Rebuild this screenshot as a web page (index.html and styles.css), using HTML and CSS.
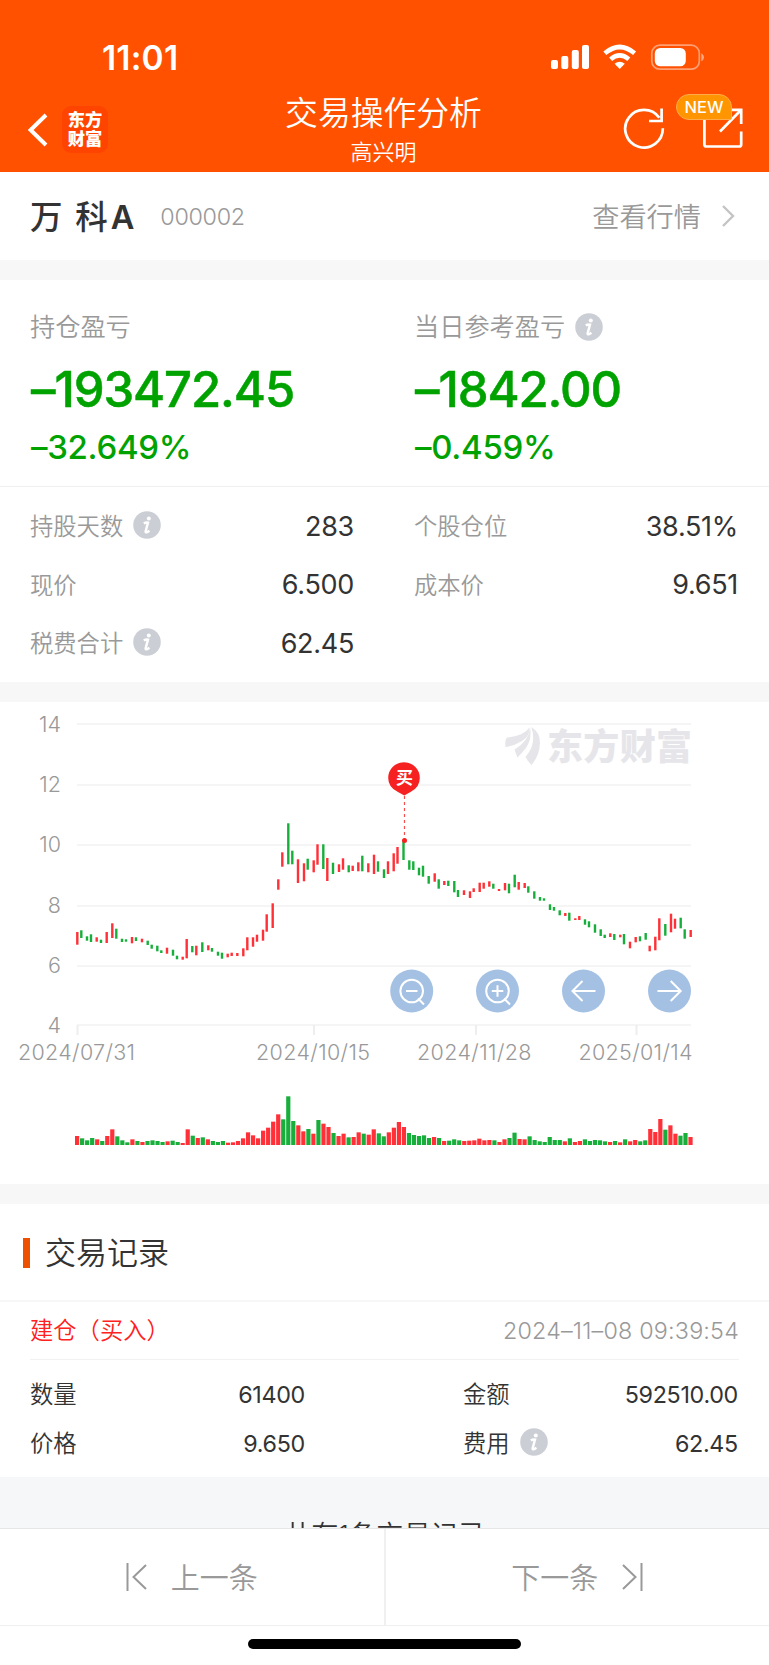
FILE: index.html
```html
<!DOCTYPE html>
<html lang="zh-CN">
<head>
<meta charset="UTF-8"/>
<title>交易操作分析</title>
<link rel="stylesheet" href="styles.css">
</head>

<body>
<svg width="0" height="0" class="defs">
  <symbol id="info" viewBox="0 0 28 28">
    <circle cx="14" cy="14" r="13.8" fill="#cbcfd5"/>
    <circle cx="15.800" cy="7.600" r="2" fill="#fff"/>
    <path d="M10.800 12.400Q13 11.200 15 11.600L12.600 20.400Q12.600 22.600 16.400 19.800" fill="none" stroke="#fff" stroke-width="2.400"/>
  </symbol>
</svg>
<div id="top">
  <div class="status">
    <span class="time">11:01</span>
    <svg width="154" height="28" viewBox="0 0 154 28">
      <g fill="#fff">
        <rect x="0" y="16" width="7" height="9" rx="2"/>
        <rect x="10.300" y="12" width="7" height="13" rx="2"/>
        <rect x="20.800" y="6" width="7" height="19" rx="2"/>
        <rect x="31" y="1" width="7" height="24" rx="2"/>
      </g>
      <g fill="none" stroke="#fff" stroke-width="4.600">
        <path d="M53.800 9.200Q68.700 -3.200 83.600 9.200"/>
        <path d="M59.600 15.200Q68.700 7.600 77.800 15.200"/>
      </g>
      <path d="M68.700 25L63.600 19.700Q68.700 15.700 73.800 19.700Z" fill="#fff"/>
      <rect x="100.800" y="1.200" width="47.500" height="24" rx="8" fill="none" stroke="#fff" stroke-opacity=".45" stroke-width="1.700"/>
      <rect x="103.800" y="4" width="31" height="18.300" rx="5.500" fill="#fff"/>
      <path d="M150.300 9.200Q153 10.600 153 13.200T150.300 17.200Z" fill="#fff" fill-opacity=".5"/>
    </svg>
  </div>
  <div class="nav">
    <div class="nav-left">
      <svg width="20" height="34" viewBox="0 0 20 34"><path d="M18 2L2.600 17L18 32" fill="none" stroke="#fff" stroke-width="4"/></svg>
      <div class="logo">东方<br/>财富</div>
    </div>
    <div class="nav-title">
      <h1>交易操作分析</h1>
      <p>高兴明</p>
    </div>
    <div class="nav-right">
      <svg width="42" height="42" viewBox="0 0 42 42"><path d="M36.300 10.800A18.800 18.800 0 1 0 39.800 21.200M38.600 1.500V14H26" fill="none" stroke="#fff" stroke-width="2.700"/></svg>
      <div class="share">
        <svg width="42" height="42" viewBox="0 0 42 42"><path d="M2.400 10V37.500Q2.400 39.500 4.400 39.500H37.200Q39.200 39.500 39.200 37.500V24.500M28 2.800H39.200V17M38.500 3.500L18 24.500" fill="none" stroke="#fff" stroke-width="2.700"/></svg>
        <span class="badge">NEW</span>
      </div>
    </div>
  </div>
</div>

<div class="stock">
  <b>万 科<i>A</i></b><span class="code">000002</span>
  <a class="quote">查看行情<svg width="14" height="24" viewBox="0 0 14 24"><path d="M2 2L12 12L2 22" fill="none" stroke="#c4c4c4" stroke-width="2.400"/></svg></a>
</div>

<div class="profit">
  <div class="col">
    <p class="tit">持仓盈亏</p>
    <p class="big">–193472.45</p>
    <p class="rate">–32.649%</p>
  </div>
  <div class="col">
    <p class="tit">当日参考盈亏<svg class="ico"><use href="#info"/></svg></p>
    <p class="big">–1842.00</p>
    <p class="rate">–0.459%</p>
  </div>
</div>
<div class="detail">
  <div class="item"><label>持股天数<svg class="ico"><use href="#info"/></svg></label><span>283</span></div>
  <div class="item"><label>个股仓位</label><span>38.51%</span></div>
  <div class="item"><label>现价</label><span>6.500</span></div>
  <div class="item"><label>成本价</label><span>9.651</span></div>
  <div class="item"><label>税费合计<svg class="ico"><use href="#info"/></svg></label><span>62.45</span></div>
</div>

<div class="chart">
  <svg width="769" height="482" viewBox="0 702 769 482">
    <path class="grid" d="M77 724H691M77 785H691M77 845H691M77 906H691M77 966H691M77 1025H691"/>
    <path class="tick" d="M77.500 1025V1035M314 1025V1035M476 1025V1035M636.500 1025V1035"/>
    <g class="ylabel">
      <text x="61" y="731.500">14</text>
      <text x="61" y="792">12</text>
      <text x="61" y="852">10</text>
      <text x="61" y="912.500">8</text>
      <text x="61" y="973">6</text>
      <text x="61" y="1033">4</text>
    </g>
    <g class="xlabel">
      <text x="18" y="1060" textLength="117">2024/07/31</text>
      <text x="256" y="1060" textLength="114">2024/10/15</text>
      <text x="417" y="1060" textLength="114.500">2024/11/28</text>
      <text x="578.500" y="1060" textLength="114">2025/01/14</text>
    </g>
    <g class="mark">
      <path d="M505.500 747Q504.500 740 507 737.500Q523 736.500 529.500 727.500Q530 736 522 741Q514 746 505.500 747Z"/>
      <path d="M530.200 728Q532 739 526 748Q522 753 517.500 757.500Q515.500 753 514.500 749.500Q528 742 530.200 728Z"/>
      <path d="M531.300 727Q540 732 540 743Q539.500 756 531.500 765Q527.500 761 525.500 757Q537 744 531.300 727Z"/>
      <text x="547" y="760" textLength="145">东方财富</text>
    </g>
    <g id="kline"></g>
    <g id="volume"></g>
    <path d="M404.500 796V840" stroke="#f62222" stroke-opacity=".8" stroke-width="1.200" stroke-dasharray="3 3"/>
    <circle cx="404.500" cy="840.500" r="2.500" fill="#f62222"/>
    <path d="M404.300 795.500L398 792Q388.200 787.500 388.200 778A15.800 15.800 0 0 1 419.800 778Q419.800 787.500 410.500 792Z" fill="#f62222"/>
    <text class="buy" x="404.500" y="784">买</text>
    <g class="btns">
      <circle cx="411.700" cy="991" r="21.500"/><circle cx="497.500" cy="991" r="21.500"/><circle cx="583.500" cy="991" r="21.500"/><circle cx="669.500" cy="991" r="21.500"/>
      <path d="M423 991A11.300 11.300 0 1 1 400.400 991A11.300 11.300 0 1 1 423 991M418 998.500L424 1004.500M406 991H417.500"/>
      <path d="M508.800 991A11.300 11.300 0 1 1 486.200 991A11.300 11.300 0 1 1 508.800 991M504 998.500L510 1004.500M491.800 991H503.300M497.500 985.200V996.800"/>
      <path d="M595.500 991H573M582.500 981L572.500 991L582.500 1001"/>
      <path d="M657.500 991H680M670.700 981L680.700 991L670.700 1001"/>
    </g>
  </svg>
</div>

<div class="record">
  <h2>交易记录</h2>
  <div class="rec-head"><span class="red">建仓（买入）</span><span class="date">2024–11–08 09:39:54</span></div>
  <div class="rec-body">
    <div class="item"><label>数量</label><span>61400</span></div>
    <div class="item"><label>金额</label><span>592510.00</span></div>
    <div class="item"><label>价格</label><span>9.650</span></div>
    <div class="item"><label>费用<svg class="ico"><use href="#info"/></svg></label><span>62.45</span></div>
  </div>
</div>
<div class="total">共有1条交易记录</div>
<div class="pager">
  <a><svg width="22" height="28" viewBox="0 0 22 28"><path d="M1.500 0V28M20 2L7.500 14L20 26" fill="none" stroke="#999" stroke-width="2"/></svg><span>上一条</span></a>
  <a><span>下一条</span><svg width="22" height="28" viewBox="0 0 22 28"><path d="M20.500 0V28M2 2L14.500 14L2 26" fill="none" stroke="#999" stroke-width="2"/></svg></a>
</div>
<div class="home"><i></i></div>

<script type="text/javascript">
// x, high, low, 1 = up / 0 = down
var kline = [
[77.300,932,944.700,1],[81.300,930.300,938,0],[87,936.300,940.700,0],[91,934.300,942,0],[96.700,937.300,941.700,1],[101,939.700,943,0],
[106.700,932,943,1],[112.300,923.300,938,1],[116.300,928.700,938.700,0],[122,938.700,942,0],[126,939.300,941.700,0],[132,937,943.300,1],
[136,937.300,941,0],[142,938.700,942.300,1],[147.700,940.700,945,0],[151.700,944.700,948.700,0],[157.300,945.700,951.300,0],[161.300,950.300,953,0],
[167,947.700,953.700,1],[173,949.700,955.700,0],[177,955.700,959.300,0],[182.700,956.700,959.700,1],[186.700,939,958.300,1],[192.300,946,952.300,0],
[196.300,945.700,955.300,1],[202.300,942.300,952,0],[208.300,945.300,950.300,1],[212,948,951.700,0],[218,951.700,955.700,0],[222,952.700,958.700,0],
[227.700,953.700,957.300,1],[231.700,952.700,956,1],[237.300,953,956,1],[243.300,948.300,956.300,1],[247.300,937.300,950.300,1],[253,937.300,946.700,1],
[257,934.700,941.700,1],[263,929.700,940.700,1],[266.700,914.300,931.700,1],[272.700,903.300,928,1],[278.300,879.300,889.700,1],[282.300,852.300,866.700,1],
[288.300,823.300,864.300,0],[292.300,850.700,864.300,0],[298,859.300,883,1],[304,863.300,881.300,1],[307.700,858.700,869.700,0],[313.700,860.300,872.300,1],
[317.500,844.300,864.700,1],[323.300,844.300,869,0],[327.300,858,881,1],[333,862.700,874,0],[339,864.300,872,1],[343,858.300,869.700,1],
[348.700,865.300,872.300,0],[352.700,865.700,871,1],[358.300,862.300,871.300,1],[362.300,855.700,871.300,0],[368.300,863.300,872.300,1],[374,854.700,874,1],
[378,861.300,871.700,0],[384,869.300,878,0],[388,861.300,874,1],[393.700,853.300,871.300,1],[397.500,847,863.700,1],[403.500,840.700,860,0],
[409.300,860.300,869.700,0],[413.300,861.300,870,0],[419,867.700,875.300,0],[423,865.700,876.700,0],[428.700,876,883.700,0],[434.700,873.300,881.700,1],
[438.700,879.300,888.700,0],[444.300,881,885,1],[448.300,880.700,886,0],[454.300,881,892.300,0],[458,890,897,0],[464,890.300,895,1],
[470,891.300,898,1],[473.700,888.300,892,1],[479.700,882.700,892,1],[483.700,882.700,888.700,1],[489.300,881.300,886.700,1],[493.300,883.700,888.700,0],
[499,889,891,1],[505,883,890.300,1],[509,883.700,893.300,0],[514.700,874.700,887.300,0],[518.700,882,889.700,1],[524.700,883,888,1],
[528.300,886.300,892.700,0],[534.300,891.300,898.700,0],[540,897,900.700,0],[544,898.300,900.700,0],[550,904.300,910,0],[554,907,910.700,0],
[559.700,910.300,915.300,0],[565.300,913,916,1],[569.300,912.700,920.700,0],[575.300,918.300,920,1],[579.300,916,920,1],[585,919.300,924.700,0],
[589,921.300,927.300,0],[595,924.300,932.700,0],[600.700,929.300,936,0],[604.700,934.700,938,0],[610.300,933.300,937,1],[614.300,934,940,0],
[620.300,934.700,937.300,1],[624,934,944.300,0],[630,941.700,948.300,1],[635.700,937,942.300,1],[640,936.300,941.300,0],[645.700,933,939.700,0],
[649.700,945.700,951.300,1],[655.300,936.700,950.300,1],[659.300,918.300,940.300,1],[665.300,924,935.700,0],[671,913.700,932.300,1],[675,918.700,928.700,1],
[680.700,917.700,928.300,0],[684.700,929.300,938.700,0],[690.700,930,937,1]
];
// volume, negative = down day
var volume = [
27,-20,-14,-21,17,-12,27,47,-26,-14,-8,17,-12,9,-12,-14,-12,-9,11,-13,-9,6,47,-28,21,-23,17,-12,-9,-12,7,8,12,20,38,29,20,43,52,70,92,
-77,-146,-72,59,41,-48,34,-75,64,54,-36,27,34,-23,24,38,-34,31,47,-35,-26,38,52,69,54,-36,-30,-27,-29,-21,24,-21,12,-13,-17,-14,12,13,14,19,14,
15,-14,9,17,-21,-37,18,17,-26,-15,-11,-9,-24,-15,-15,11,-20,9,12,-17,-12,-15,-14,-11,9,-12,8,-17,11,15,-11,-14,48,39,78,-46,59,34,-28,-36,24
];
var html = "";
for (var i = 0; i < kline.length; i++) {
	var k = kline[i];
	html += '<rect class="' + (k[3] ? "up" : "down") + '" x="' + (k[0] - 1.2) + '" y="' + k[1] + '" width="2.4" height="' + (k[2] - k[1]) + '"/>';
}
document.getElementById("kline").innerHTML = html;
html = "";
for (i = 0; i < volume.length; i++) {
	var h = Math.abs(volume[i]) / 3;
	html += '<rect class="' + (volume[i] > 0 ? "up" : "down") + '" x="' + (75 + i * 5.028) + '" y="' + (1145 - h) + '" width="4.2" height="' + h + '"/>';
}
document.getElementById("volume").innerHTML = html;
</script>
</body>
</html>
```
FILE: styles.css
```css
*{margin:0;padding:0;box-sizing:border-box;}
html,body{height:1665px;overflow:hidden;}
body{width:769px; background:#fff; color:#333; font-family:Inter,"Noto Sans CJK SC",sans-serif; font-weight:350; display:flex; flex-direction:column;}
h1,h2{font-weight:350;}
svg{display:block; flex:none;}
.defs{position:absolute;}
.ico{width:28px; height:28px; margin:0 0 0 10px;}

#top{background:#ff5100; height:172px; color:#fff;}
.status{height:90px; padding:44px 64px 0 102px; display:flex; justify-content:space-between;}
.time{font-size:33.500px; line-height:28px; font-weight:600; letter-spacing:.2px;}
.nav{height:82px; display:grid; grid-template-columns:199px 1fr 201px;}
.nav-left{display:flex; padding:16px 0 0 28px; align-items:flex-start;}
.nav-left svg{margin-top:7px;}
.logo{width:46px; height:47px; margin-left:14px; border-radius:9px; background:#ff4400; font-size:17.300px; line-height:19px; font-weight:900; text-align:center; padding-top:4px;}
.nav-title{text-align:center;}
.nav-title h1{font-size:32.800px; line-height:44px; padding-top:1px;}
.nav-title p{font-size:22px; line-height:34px;}
.nav-right{display:flex; justify-content:flex-end; padding:17px 25px 0 0; gap:37px;}
.share{position:relative;}
.badge{position:absolute; left:-26px; top:-13px; width:56px; height:26px; border:1px solid #ffab4a; border-radius:13px 13px 2px 13px; background:#ff9500; font-size:16.500px; line-height:25px; font-weight:450; text-align:center;}

.stock{height:88px; padding:0 34px 0 30px; display:flex; align-items:center;}
.stock b{font-size:32.500px; font-weight:500; letter-spacing:1px; word-spacing:2px; padding-bottom:3px;}
.stock i{font-style:normal; font-weight:600; margin-left:2px;}
.code{font-size:23.300px; color:#999; margin-left:25px; letter-spacing:-.3px;}
.quote{margin-left:auto; font-size:27.200px; color:#999; display:flex; align-items:center; padding-bottom:2px;}
.quote svg{margin:2px 0 0 20px;}

.profit{border-top:20px solid #f7f7f7; height:227px; border-bottom:1px solid #f0f0f0; display:grid; grid-template-columns:384px 355px; padding:27px 0 0 30px;}
.tit{font-size:25.200px; line-height:40px; color:#999; display:flex; align-items:center;}
.big{font-size:49px; line-height:60px; margin-top:13px; padding-left:1px; color:#00a200; font-weight:500; letter-spacing:-1.100px; -webkit-text-stroke:.5px #00a200;}
.rate{font-size:33px; line-height:40px; margin-top:7px; padding-left:1px; color:#00a200; font-weight:500; letter-spacing:-.3px;}
.detail{height:195px; padding:10px 30px 0 30px; display:grid; grid-template-columns:324px 324px; column-gap:60px; grid-auto-rows:58.600px;}
.item{display:flex; align-items:center; justify-content:space-between;}
.item label{display:flex; align-items:center; font-size:23.300px; color:#999; padding-bottom:2px;}
.item span{font-size:27px; font-weight:400; letter-spacing:-.3px;}

.chart{border-top:20px solid #f7f7f7; border-bottom:20px solid #f7f7f7; height:522px;}
.grid{stroke:#f5f5f5; stroke-width:2;}
.tick{stroke:#eee; stroke-width:2;}
.ylabel{font-size:21.500px; fill:#999; text-anchor:end;}
.xlabel{font-size:21.500px; fill:#999;}
.mark{fill:#e6e6ea;}
.mark text{font-size:36px; font-weight:900;}
.up{fill:#ff3037;}
.down{fill:#18ae3c;}
.buy{font-size:17px; font-weight:600; fill:#fff; text-anchor:middle;}
.btns circle{fill:#a4c1e4;}
.btns path{fill:none; stroke:#fff; stroke-width:2;}

.record{height:273px;}
.record h2{height:98px; padding:0 0 4px 23px; font-size:31px; display:flex; align-items:center; border-bottom:2px solid #f7f7f7;}
.record h2:before{content:""; width:7px; height:30px; background:#ec5000; margin:5px 15px 0 0;}
.rec-head{margin:0 30px; height:58px; display:flex; justify-content:space-between; align-items:center; border-bottom:1px solid #f2f2f2; font-size:23.300px;}
.red{color:#ff2020; padding-bottom:3px;}
.date{color:#999; letter-spacing:.2px;}
.rec-body{padding:10px 31px 0 30px; display:grid; grid-template-columns:275px 275px; column-gap:158px; grid-auto-rows:49px;}
.rec-body .item label{color:#333; padding-bottom:3px;}
.rec-body .item span{font-size:23.300px; font-weight:400; letter-spacing:-.300px; padding-bottom:1px;}
.total{height:51px; background:#f6f7f9; font-size:27.200px; line-height:28px; padding-top:45px; text-align:center; overflow:hidden;}
.pager{height:98px; border-top:1px solid #e6e6e6; border-bottom:1px solid #f0f0f0; display:flex; background:#fff;}
.pager a{flex:1; display:flex; align-items:center; justify-content:center; gap:23px; color:#999; font-size:29px;}
.pager a:first-child{border-right:2px solid #f0f0f0;}
.pager span{padding-bottom:3px;}
.home{height:39px; padding-top:13px;}
.home i{display:block; width:273px; height:10px; margin:0 auto; border-radius:5px; background:#000;}
```
